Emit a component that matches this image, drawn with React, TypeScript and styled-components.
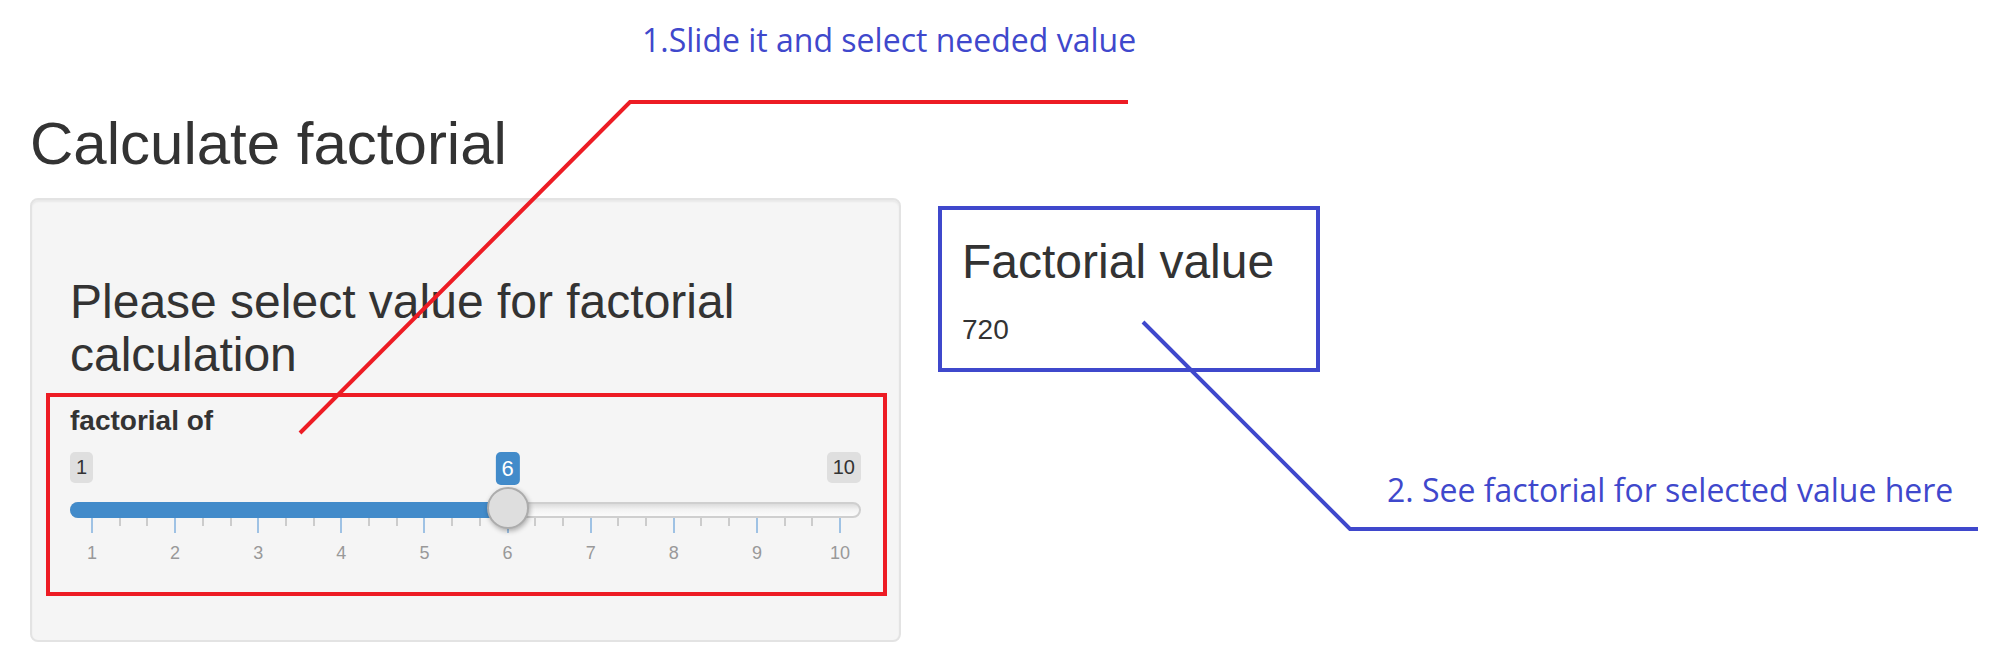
import React from "react";
import styled, { createGlobalStyle } from "styled-components";

const MIN = 1;
const MAX = 10;
const VALUE = 6;
const SLIDER_WIDTH = 791;
const HANDLE_SIZE = 42;
const GRID_LEFT = 22;
const GRID_WIDTH = 748;
const SUBSTEPS = 3;

const GlobalStyle = createGlobalStyle`
  html, body {
    margin: 0;
    padding: 0;
    background: #ffffff;
  }
  body {
    font-family: "Liberation Sans", Arial, sans-serif;
    color: #333333;
  }
  * {
    box-sizing: border-box;
  }
`;

const Page = styled.div`
  position: relative;
  width: 1995px;
  height: 666px;
  overflow: hidden;
`;

const Container = styled.div`
  padding: 0 30px;
`;

const Title = styled.h2`
  margin: 111px 0 21px;
  font-size: 60px;
  font-weight: 400;
  line-height: 66px;
`;

const Row = styled.div`
  display: flex;
  align-items: flex-start;
  gap: 37px;
`;

const Sidebar = styled.div`
  flex: none;
  width: 871px;
`;

const Well = styled.div`
  background: #f5f5f5;
  border: 2px solid #e3e3e3;
  border-radius: 8px;
  box-shadow: inset 0 2px 2px rgba(0, 0, 0, 0.05);
  padding: 38px;
`;

const PanelHeading = styled.h3`
  margin: 38px 0 11px;
  font-size: 48px;
  font-weight: 400;
  line-height: 52.8px;
`;

// red annotation frame drawn round the input group
const Highlight = styled.div`
  margin: 0 -26px 6px -24px;
  padding: 4px 22px 20px 20px;
  border: 4px solid #ed1c24;
`;

const Label = styled.label`
  display: block;
  margin-bottom: 10px;
  font-size: 28px;
  font-weight: 700;
  line-height: 40px;
`;

const Slider = styled.div`
  position: relative;
  display: flex;
  flex-direction: column;
  width: ${SLIDER_WIDTH}px;
  height: 121px;
  padding-top: 1px;
`;

const Edges = styled.div`
  display: flex;
  justify-content: space-between;
  height: 34px;
`;

const EdgeBadge = styled.span`
  display: block;
  height: 31px;
  padding: 2px 6px;
  border-radius: 5px;
  background: #dfdfdf;
  color: #333333;
  font-size: 20px;
  line-height: 27px;
`;

const ValueBadge = styled.span`
  position: absolute;
  top: 1px;
  transform: translateX(-50%);
  height: 33px;
  padding: 2px 6px;
  border-radius: 5px;
  background: #428bca;
  color: #ffffff;
  font-size: 22px;
  line-height: 29px;
`;

const Track = styled.div`
  position: relative;
  margin-top: 16px;
  height: 16px;
  border: 2px solid #cfcfcf;
  border-radius: 8px;
  background: linear-gradient(to bottom, #dcdcdc 0%, #f2f2f2 45%, #fbfbfb 100%);
`;

const Fill = styled.div`
  position: absolute;
  left: -2px;
  top: -2px;
  bottom: -2px;
  background: #428bca;
  border-radius: 8px 0 0 8px;
`;

const Handle = styled.div`
  position: absolute;
  top: 36px;
  width: ${HANDLE_SIZE}px;
  height: ${HANDLE_SIZE}px;
  border: 2px solid #acacac;
  border-radius: 50%;
  background: #dedede;
  box-shadow: 1px 2px 5px rgba(0, 0, 0, 0.3);
`;

const Grid = styled.div`
  display: flex;
  flex-direction: column;
  gap: 10px;
  margin: -1px 21px 0 ${GRID_LEFT}px;
`;

const TickRow = styled.div`
  display: flex;
  justify-content: space-between;
  align-items: flex-start;
  margin: 0 -1px;
  height: 16px;
`;

const Tick = styled.span<{ $major: boolean }>`
  width: 2px;
  height: ${(p) => (p.$major ? "16px" : "9px")};
  background: ${(p) => (p.$major ? "#9fc2e4" : "#cccccc")};
`;

const LabelRow = styled.div`
  display: flex;
  justify-content: space-between;
`;

const TickLabel = styled.span`
  display: flex;
  justify-content: center;
  width: 0;
  color: #999999;
  font-size: 18px;
  line-height: 20px;
  white-space: nowrap;
`;

const OutputBox = styled.div`
  width: 382px;
  margin-top: 8px;
  border: 4px solid #3f48cc;
  padding: 0 20px 18px;
`;

const OutputHeading = styled.h3`
  margin: 26px 0 21px;
  font-size: 48px;
  font-weight: 400;
  line-height: 52.8px;
`;

const OutputText = styled.div`
  font-size: 28px;
  line-height: 40px;
`;

const Annotations = styled.div`
  position: absolute;
  inset: 0;
  pointer-events: none;
`;

const Callout = styled.span<{ $x: number; $y: number }>`
  position: absolute;
  left: ${(p) => p.$x}px;
  top: ${(p) => p.$y}px;
  color: #3f48cc;
  font-family: "Open Sans", "Noto Sans", sans-serif;
  font-size: 32px;
  line-height: 32px;
  white-space: nowrap;
`;

function RangeSlider({ min, max, value }: { min: number; max: number; value: number }) {
  const ratio = (value - min) / (max - min);
  const center = GRID_LEFT + ratio * GRID_WIDTH;
  const steps = max - min;
  const ticks = Array.from({ length: steps * SUBSTEPS + 1 }, (_, i) => i);
  const labels = Array.from({ length: steps + 1 }, (_, i) => min + i);

  return (
    <Slider>
      <Edges>
        <EdgeBadge>{min}</EdgeBadge>
        <EdgeBadge>{max}</EdgeBadge>
      </Edges>
      <ValueBadge style={{ left: center }}>{value}</ValueBadge>
      <Track>
        <Fill style={{ width: center + 2 }} />
      </Track>
      <Handle style={{ left: center - HANDLE_SIZE / 2 }} />
      <Grid>
        <TickRow>
          {ticks.map((i) => (
            <Tick key={i} $major={i % SUBSTEPS === 0} />
          ))}
        </TickRow>
        <LabelRow>
          {labels.map((n) => (
            <TickLabel key={n}>{n}</TickLabel>
          ))}
        </LabelRow>
      </Grid>
    </Slider>
  );
}

export default function App() {
  return (
    <Page>
      <GlobalStyle />
      <Container>
        <Title>Calculate factorial</Title>
        <Row>
          <Sidebar>
            <Well>
              <PanelHeading>Please select value for factorial calculation</PanelHeading>
              <Highlight>
                <Label>factorial of</Label>
                <RangeSlider min={MIN} max={MAX} value={VALUE} />
              </Highlight>
            </Well>
          </Sidebar>
          <OutputBox>
            <OutputHeading>Factorial value</OutputHeading>
            <OutputText>720</OutputText>
          </OutputBox>
        </Row>
      </Container>
      <Annotations>
        <svg width="1995" height="666" viewBox="0 0 1995 666">
          <polyline
            points="300,433 630,102 1128,102"
            fill="none"
            stroke="#ed1c24"
            strokeWidth="4"
          />
          <polyline
            points="1143,322 1350,529 1978,529"
            fill="none"
            stroke="#3f48cc"
            strokeWidth="4"
          />
        </svg>
        <Callout $x={642} $y={24}>1.Slide it and select needed value</Callout>
        <Callout $x={1387} $y={474}>2. See factorial for selected value here</Callout>
      </Annotations>
    </Page>
  );
}
